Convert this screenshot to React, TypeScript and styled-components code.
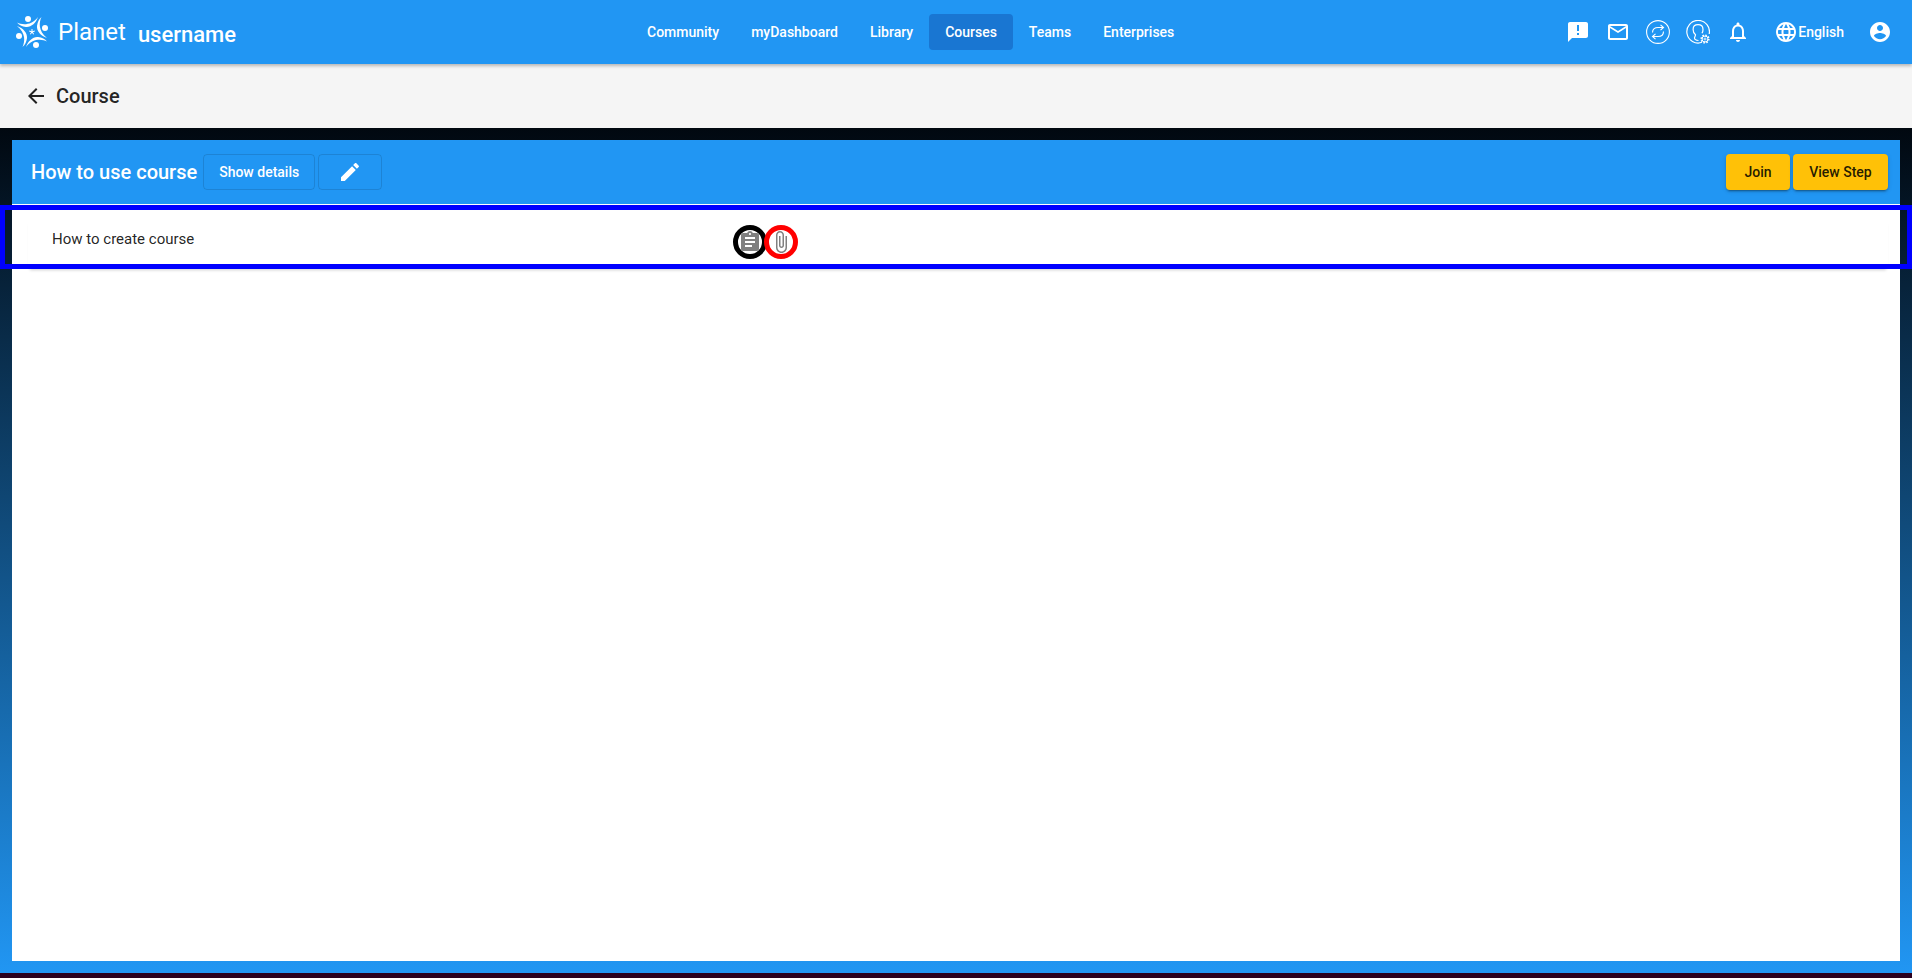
import React from 'react';
import styled, { createGlobalStyle } from 'styled-components';

const GlobalStyle = createGlobalStyle`
  html, body {
    margin: 0;
    height: 100%;
    background: #2a001f;
    font-family: Roboto, "Liberation Sans", sans-serif;
    overflow: hidden;
  }
`;

const Page = styled.div`
  height: 973px;
  display: flex;
  flex-direction: column;
`;

const Toolbar = styled.header`
  height: 64px;
  flex: none;
  display: flex;
  align-items: center;
  background: #2196f3;
  color: #fff;
  box-shadow: 0 2px 3px rgba(0, 0, 0, 0.25);
  position: relative;
  z-index: 2;
  padding: 0 12px 0 16px;
  box-sizing: border-box;
`;

const Brand = styled.div`
  display: flex;
  align-items: center;
  width: 615px;
  flex: none;
`;

const BrandName = styled.span`
  font-size: 24px;
  margin-left: 10px;
  margin-top: -1px;
`;

const UserName = styled.span`
  font-size: 22px;
  font-weight: 500;
  margin-left: 12px;
  margin-top: 4px;
`;

const Nav = styled.nav`
  display: flex;
  flex: 1;
`;

const NavLink = styled.a<{ $active?: boolean }>`
  height: 36px;
  line-height: 36px;
  padding: 0 16px;
  border-radius: 4px;
  font-size: 14px;
  font-weight: 500;
  background: ${props => (props.$active ? '#1976d2' : 'transparent')};
`;

const Actions = styled.div`
  display: flex;
  align-items: center;
`;

const IconButton = styled.span`
  width: 40px;
  height: 40px;
  display: flex;
  align-items: center;
  justify-content: center;
`;

const LangButton = styled.span`
  display: flex;
  align-items: center;
  padding: 0 16px;
  height: 36px;
  font-size: 14px;
  font-weight: 500;
`;

const SubBar = styled.div`
  height: 64px;
  flex: none;
  display: flex;
  align-items: center;
  background: #f5f5f5;
  color: rgba(0, 0, 0, 0.87);
  padding-left: 24px;
  box-sizing: border-box;
  font-size: 20px;
  font-weight: 500;
  gap: 8px;
`;

const Main = styled.main`
  flex: 1;
  min-height: 0;
  padding: 12px;
  display: flex;
  flex-direction: column;
  background: linear-gradient(to bottom, #010810 0%, #2196f3 100%);
`;

const PanelHeader = styled.div`
  height: 64px;
  flex: none;
  display: flex;
  align-items: center;
  background: #2196f3;
  color: #fff;
  padding: 0 12px 0 19px;
`;

const PanelTitle = styled.h1`
  margin: 0 6px 0 0;
  font-size: 20px;
  font-weight: 500;
`;

const OutlineButton = styled.button<{ $width: number }>`
  width: ${props => props.$width}px;
  height: 36px;
  margin-right: 3px;
  padding: 0;
  display: flex;
  align-items: center;
  justify-content: center;
  background: transparent;
  border: 1px solid rgba(0, 0, 0, 0.12);
  border-radius: 4px;
  color: #fff;
  font: 500 14px Roboto, sans-serif;
`;

const Spacer = styled.div`
  flex: 1;
`;

const AccentButton = styled.button<{ $width: number }>`
  width: ${props => props.$width}px;
  height: 36px;
  margin-left: 3px;
  padding: 0;
  background: #ffc107;
  border: 0;
  border-radius: 4px;
  color: rgba(0, 0, 0, 0.87);
  font: 500 14px Roboto, sans-serif;
  box-shadow: 0 3px 1px -2px rgba(0, 0, 0, 0.2), 0 2px 2px rgba(0, 0, 0, 0.14), 0 1px 5px rgba(0, 0, 0, 0.12);
`;

const Panel = styled.section`
  flex: 1;
  min-height: 0;
  background: #fff;
  padding: 16px 12px 0 16px;
`;

const StepRow = styled.div`
  position: relative;
  height: 49px;
  display: grid;
  grid-template-columns: 681px auto 1fr;
  align-items: start;
  padding-left: 24px;
  background: #fff;
  box-shadow: 0 3px 3px -2px rgba(0, 0, 0, 0.2);
  font-size: 15px;
  color: rgba(0, 0, 0, 0.87);

  /* debug outline sits over the panel edges */
  &::after {
    content: '';
    position: absolute;
    left: -28px;
    right: -24px;
    top: -15px;
    bottom: 0;
    border: 5px solid #0000ff;
    pointer-events: none;
  }
`;

const StepName = styled.span`
  margin-top: 9px;
  line-height: 20px;
`;

const StepIcons = styled.div`
  display: flex;
  margin-top: 5px;
`;

const Ring = styled.span<{ $color: string }>`
  width: 24px;
  height: 24px;
  border: 5px solid ${props => props.$color};
  border-radius: 50%;
  display: flex;
  align-items: center;
  justify-content: center;
  color: #808080;

  & + & {
    margin-left: -3px;
  }
`;

const Icon = ({ d, size = 24 }: { d: string; size?: number }) => (
  <svg width={size} height={size} viewBox="0 0 24 24" fill="currentColor">
    <path d={d} />
  </svg>
);

const Logo = () => (
  <svg width="32" height="32" viewBox="0 0 32 32" fill="#fff">
    {[0, 90, 180, 270].map(angle => (
      <g key={angle} transform={`rotate(${angle} 16 16)`}>
        <circle cx="12" cy="3" r="3" />
        <path d="M1 6.500C6 9 15 10 22 1C20 7 15 11.500 10 11C6 10.500 3 9 1 6.500Z" />
      </g>
    ))}
    <path d="M15.500 13h1v2.300l2.100-.7.300.9-2.100.7 1.300 1.800-.8.6-1.300-1.800-1.300 1.800-.8-.6 1.300-1.800-2.100-.7.300-.9 2.100.7z" />
  </svg>
);

const SyncIcon = () => (
  <svg width="24" height="24" viewBox="0 0 24 24" fill="none" stroke="#fff" strokeWidth="1.1">
    <circle cx="12" cy="12" r="11.4" />
    <path d="M6.500 12.500C6.500 9 9 7.500 12 7.500h5.500M14.500 4.800l3 2.700-3 2.700" />
    <path d="M17.500 11.500c0 3.500-2.500 5-5.500 5H6.500M9.500 13.800l-3 2.700 3 2.700" />
  </svg>
);

const ManagerIcon = () => (
  <svg width="24" height="24" viewBox="0 0 24 24" fill="none" stroke="#fff" strokeWidth="1.2">
    <path d="M16 22.300A11.300 11.300 0 1 1 23.200 14" />
    <path d="M12.500 20.500c-2.500-.3-4-1-4-2.500 0-1.300 1-1.800 1-3.200-1.400-1-2.400-3-2.400-5.300C7.100 6.500 9 4.700 12 4.700s5 1.800 5 4.800c0 1.500-.4 2.800-1 3.800" />
    <circle cx="19" cy="19" r="3.600" strokeWidth="2" strokeDasharray="1.500 1.300" />
    <circle cx="19" cy="19" r="3" strokeWidth="1" />
    <circle cx="19" cy="19" r="1" strokeWidth="0.800" />
  </svg>
);

const paths = {
  feedback: 'M20 2H4c-1.1 0-1.99.9-1.99 2L2 22l4-4h14c1.1 0 2-.9 2-2V4c0-1.1-.9-2-2-2zm-7 9h-2V5h2v6zm0 4h-2v-2h2v2z',
  mail: 'M20 4H4c-1.1 0-1.99.9-1.99 2L2 18c0 1.1.9 2 2 2h16c1.1 0 2-.9 2-2V6c0-1.1-.9-2-2-2zm0 14H4V8l8 5 8-5v10zm-8-7L4 6h16l-8 5z',
  bell: 'M12 22c1.1 0 2-.9 2-2h-4c0 1.1.9 2 2 2zm6-6v-5c0-3.07-1.63-5.64-4.5-6.32V4c0-.83-.67-1.5-1.5-1.5s-1.5.67-1.5 1.5v.68C7.64 5.36 6 7.92 6 11v5l-2 2v1h16v-1l-2-2zm-2 1H8v-6c0-2.48 1.51-4.5 4-4.5s4 2.02 4 4.5v6z',
  globe: 'M11.99 2C6.47 2 2 6.48 2 12s4.47 10 9.99 10C17.52 22 22 17.52 22 12S17.52 2 11.99 2zm6.93 6h-2.95c-.32-1.25-.78-2.45-1.38-3.56 1.84.63 3.37 1.91 4.33 3.56zM12 4.04c.83 1.2 1.48 2.53 1.91 3.96h-3.82c.43-1.43 1.08-2.76 1.91-3.96zM4.26 14C4.1 13.36 4 12.69 4 12s.1-1.36.26-2h3.38c-.08.66-.14 1.32-.14 2 0 .68.06 1.34.14 2H4.26zm.82 2h2.95c.32 1.25.78 2.45 1.38 3.56-1.84-.63-3.37-1.9-4.33-3.56zm2.95-8H5.08c.96-1.66 2.49-2.93 4.33-3.56C8.81 5.55 8.35 6.75 8.03 8zM12 19.96c-.83-1.2-1.48-2.53-1.91-3.96h3.82c-.43 1.43-1.08 2.76-1.91 3.96zM14.34 14H9.66c-.09-.66-.16-1.32-.16-2 0-.68.07-1.35.16-2h4.68c.09.65.16 1.32.16 2 0 .68-.07 1.34-.16 2zm.25 5.56c.6-1.11 1.06-2.31 1.38-3.56h2.95c-.96 1.65-2.49 2.93-4.33 3.56zM16.36 14c.08-.66.14-1.32.14-2 0-.68-.06-1.34-.14-2h3.38c.16.64.26 1.31.26 2s-.1 1.36-.26 2h-3.38z',
  account: 'M12 2C6.48 2 2 6.48 2 12s4.48 10 10 10 10-4.48 10-10S17.52 2 12 2zm0 3c1.66 0 3 1.34 3 3s-1.34 3-3 3-3-1.34-3-3 1.34-3 3-3zm0 14.2c-2.5 0-4.71-1.28-6-3.22.03-1.99 4-3.08 6-3.08 1.99 0 5.97 1.09 6 3.08-1.29 1.94-3.5 3.22-6 3.22z',
  back: 'M20 11H7.83l5.59-5.59L12 4l-8 8 8 8 1.41-1.41L7.83 13H20v-2z',
  edit: 'M3 17.25V21h3.75L17.81 9.94l-3.75-3.75L3 17.25zM20.71 7.04c.39-.39.39-1.02 0-1.41l-2.34-2.34c-.39-.39-1.02-.39-1.41 0l-1.83 1.83 3.75 3.75 1.83-1.83z',
  assignment: 'M19 3h-4.18C14.4 1.84 13.3 1 12 1c-1.3 0-2.4.84-2.82 2H5c-1.1 0-2 .9-2 2v14c0 1.1.9 2 2 2h14c1.1 0 2-.9 2-2V5c0-1.1-.9-2-2-2zm-7 0c.55 0 1 .45 1 1s-.45 1-1 1-1-.45-1-1 .45-1 1-1zm2 14H7v-2h7v2zm3-4H7v-2h10v2zm0-4H7V7h10v2z',
  attach: 'M16.5 6v11.5c0 2.21-1.79 4-4 4s-4-1.79-4-4V5c0-1.38 1.12-2.5 2.5-2.5s2.5 1.12 2.5 2.5v10.5c0 .55-.45 1-1 1s-1-.45-1-1V6H10v9.5c0 1.38 1.12 2.5 2.5 2.5s2.5-1.12 2.5-2.5V5c0-2.21-1.79-4-4-4S7 2.79 7 5v12.5c0 3.04 2.46 5.5 5.5 5.5s5.5-2.46 5.5-5.5V6h-1.5z',
};

const navItems = ['Community', 'myDashboard', 'Library', 'Courses', 'Teams', 'Enterprises'];

export default function App() {
  return (
    <Page>
      <GlobalStyle />
      <Toolbar>
        <Brand>
          <Logo />
          <BrandName>Planet</BrandName>
          <UserName>username</UserName>
        </Brand>
        <Nav>
          {navItems.map(item => (
            <NavLink key={item} $active={item === 'Courses'}>{item}</NavLink>
          ))}
        </Nav>
        <Actions>
          <IconButton><Icon d={paths.feedback} /></IconButton>
          <IconButton><Icon d={paths.mail} /></IconButton>
          <IconButton><SyncIcon /></IconButton>
          <IconButton><ManagerIcon /></IconButton>
          <IconButton><Icon d={paths.bell} /></IconButton>
          <LangButton><Icon d={paths.globe} />English</LangButton>
          <IconButton><Icon d={paths.account} /></IconButton>
        </Actions>
      </Toolbar>
      <SubBar>
        <Icon d={paths.back} />
        Course
      </SubBar>
      <Main>
        <PanelHeader>
          <PanelTitle>How to use course</PanelTitle>
          <OutlineButton $width={112}>Show details</OutlineButton>
          <OutlineButton $width={64}><Icon d={paths.edit} /></OutlineButton>
          <Spacer />
          <AccentButton $width={64}>Join</AccentButton>
          <AccentButton $width={95}>View Step</AccentButton>
        </PanelHeader>
        <Panel>
          <StepRow>
            <StepName>How to create course</StepName>
            <StepIcons>
              <Ring $color="#000"><Icon d={paths.assignment} /></Ring>
              <Ring $color="#ff0000"><Icon d={paths.attach} /></Ring>
            </StepIcons>
          </StepRow>
        </Panel>
      </Main>
    </Page>
  );
}
